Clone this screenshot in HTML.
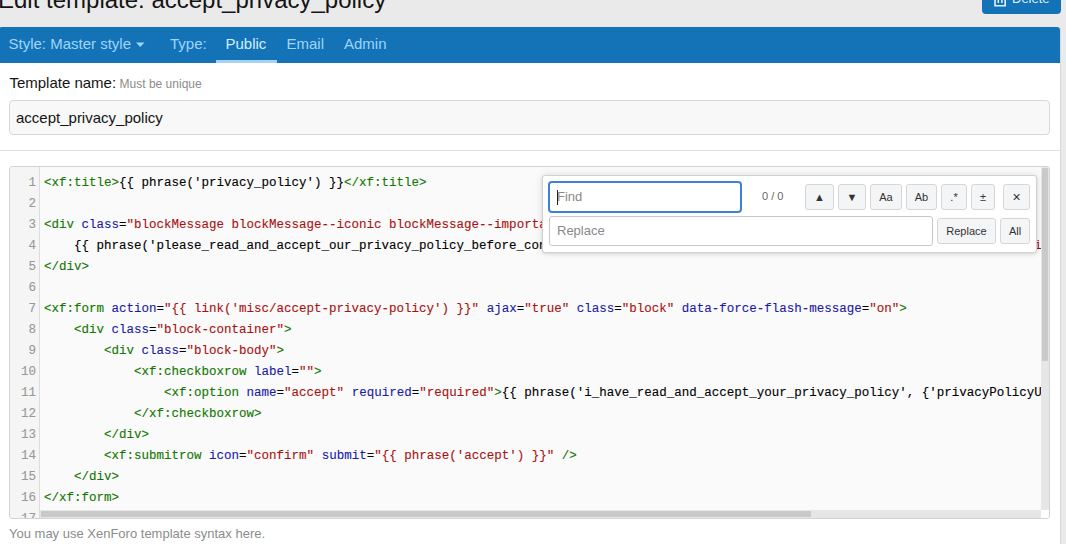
<!DOCTYPE html>
<html><head><meta charset="utf-8">
<style>
*{box-sizing:border-box;}
html,body{margin:0;padding:0;}
body{width:1066px;height:544px;overflow:hidden;position:relative;background:#eaeaea;font-family:"Liberation Sans",sans-serif;color:#141414;}
.abs{position:absolute;white-space:pre;}
#title{left:-2px;top:-14px;font-size:24px;line-height:28px;color:#141414;}
#delbtn{left:982px;top:-10px;width:79px;height:24px;background:#1373b6;border-radius:4px;}
#delbtn .t{position:absolute;left:30px;top:1px;font-size:13px;line-height:16px;color:#dff0fc;}
#delbtn svg{position:absolute;left:12px;top:0;}
#block{left:-1px;top:27px;width:1062px;height:540px;background:#fff;border:1px solid #d8d8d8;border-top:none;border-radius:3px 3px 0 0;}
#nav{left:-1px;top:27px;width:1061px;height:36px;background:#1373b6;border-radius:3px 3px 0 0;}
.tab{position:absolute;top:-1px;height:35px;font-size:15px;line-height:35px;color:#9fd5fc;white-space:pre;}
#underline{left:216px;top:60px;width:61px;height:3px;background:#a6d3f3;}
#label{left:9.4px;top:74px;font-size:15px;line-height:18px;color:#141414;}
#hint{left:119.6px;top:77px;font-size:12px;line-height:15px;color:#8c8c8c;}
#input{left:9px;top:100px;width:1041px;height:35px;background:#f8f8f8;border:1px solid #d8d8d8;border-radius:4px;}
#inputtext{left:16px;top:109px;font-size:15px;line-height:18px;color:#141414;}
#sep{left:0;top:150px;width:1060px;height:1px;background:#e2e2e2;}
#code{left:9px;top:166px;width:1041px;height:353px;background:#fafafa;border:1px solid #d3d3d3;border-radius:3px;overflow:hidden;}
#gutter{position:absolute;left:0;top:0;width:30px;height:100%;background:#f5f5f5;border-right:1px solid #dddddd;}
#lnums{position:absolute;left:0;width:26px;top:6px;font-family:"Liberation Mono",monospace;font-size:12.5px;line-height:21px;color:#999;text-align:right;white-space:pre;-webkit-text-stroke:0.12px currentColor;}
#lines{position:absolute;left:34px;top:6px;font-family:"Liberation Mono",monospace;font-size:12.5px;line-height:21px;color:#000;white-space:pre;-webkit-text-stroke:0.12px currentColor;}
.g{color:#170;} .b{color:#1a1aa8;} .r{color:#a11;}
#vscroll{left:1031px;top:0;width:8px;height:343px;background:#e6e6e6;}
#vthumb{left:1032px;top:1px;width:6px;height:193px;background:#c9c9c9;border-radius:1px;}
#hscroll{left:30px;top:343px;width:1001px;height:8px;background:#e6e6e6;}
#hthumb{left:31px;top:344px;width:770px;height:6px;background:#c9c9c9;border-radius:1px;}
#help{left:9px;top:526px;font-size:13px;line-height:16px;color:#8c8c8c;}
#panel{left:542px;top:175px;width:495px;height:78px;background:#fff;border:1px solid #d2d2d2;border-radius:3px;box-shadow:0 1px 3px rgba(0,0,0,.10),0 0 9px rgba(0,0,0,.10);}
.fi{position:absolute;background:#fff;border:1px solid #c8c8c8;border-radius:3px;font-size:13px;color:#8a8a8a;}
.fi span{position:absolute;left:8px;top:7px;line-height:15px;}
.btn{position:absolute;top:8px;height:26px;background:#f4f5f6;border:1px solid #d6d6d6;border-radius:3px;font-size:11px;line-height:24px;color:#333;text-align:center;white-space:pre;}
</style></head><body>
<div class="abs" id="title">Edit template: accept_privacy_policy</div>
<div class="abs" id="delbtn"><svg width="13" height="18" viewBox="0 0 13 18"><path d="M1 0V15.8H11.2V0" fill="none" stroke="#dff0fc" stroke-width="1.6"/><path d="M4.3 0V13M7.9 0V13" stroke="#dff0fc" stroke-width="1.5"/></svg><span class="t">Delete</span></div>
<div class="abs" id="block"></div>
<div class="abs" id="nav">
  <div class="tab" style="left:9.5px">Style: Master style</div><svg class="abs" style="left:137px;top:15px" width="9" height="6" viewBox="0 0 9 6"><path d="M0 0.5H8.5L4.25 5Z" fill="#9fd5fc"/></svg>
  <div class="tab" style="left:171px">Type:</div>
  <div class="tab" style="left:226.5px;color:#d4efff">Public</div>
  <div class="tab" style="left:287.5px">Email</div>
  <div class="tab" style="left:345px">Admin</div>
</div>
<div class="abs" id="underline"></div>
<div class="abs" id="label">Template name:</div>
<div class="abs" id="hint">Must be unique</div>
<div class="abs" id="input"></div>
<div class="abs" id="inputtext">accept_privacy_policy</div>
<div class="abs" id="sep"></div>
<div class="abs" id="code">
  <div id="gutter"></div>
  <div id="lnums"><!--N-->1
2
3
4
5
6
7
8
9
10
11
12
13
14
15
16
17<!--/N--></div>
  <div id="lines"><!--L--><span class="g">&lt;xf:title&gt;</span>{{ phrase(&#x27;privacy_policy&#x27;) }}<span class="g">&lt;/xf:title&gt;</span>

<span class="g">&lt;div</span> <span class="b">class</span>=<span class="r">&quot;blockMessage blockMessage--iconic blockMessage--important&quot;</span><span class="g">&gt;</span>
    {{ phrase(&#x27;please_read_and_accept_our_privacy_policy_before_continuing&#x27;) }}                                                     <span class="r">i</span>
<span class="g">&lt;/div&gt;</span>

<span class="g">&lt;xf:form</span> <span class="b">action</span>=<span class="r">&quot;{{ link(&#x27;misc/accept-privacy-policy&#x27;) }}&quot;</span> <span class="b">ajax</span>=<span class="r">&quot;true&quot;</span> <span class="b">class</span>=<span class="r">&quot;block&quot;</span> <span class="b">data-force-flash-message</span>=<span class="r">&quot;on&quot;</span><span class="g">&gt;</span>
    <span class="g">&lt;div</span> <span class="b">class</span>=<span class="r">&quot;block-container&quot;</span><span class="g">&gt;</span>
        <span class="g">&lt;div</span> <span class="b">class</span>=<span class="r">&quot;block-body&quot;</span><span class="g">&gt;</span>
            <span class="g">&lt;xf:checkboxrow</span> <span class="b">label</span>=<span class="r">&quot;&quot;</span><span class="g">&gt;</span>
                <span class="g">&lt;xf:option</span> <span class="b">name</span>=<span class="r">&quot;accept&quot;</span> <span class="b">required</span>=<span class="r">&quot;required&quot;</span><span class="g">&gt;</span>{{ phrase(&#x27;i_have_read_and_accept_your_privacy_policy&#x27;, {&#x27;privacyPolicyUrl&#x27;: link(&#x27;misc/privacy-policy&#x27;)}) }}
            <span class="g">&lt;/xf:checkboxrow&gt;</span>
        <span class="g">&lt;/div&gt;</span>
        <span class="g">&lt;xf:submitrow</span> <span class="b">icon</span>=<span class="r">&quot;confirm&quot;</span> <span class="b">submit</span>=<span class="r">&quot;{{ phrase(&#x27;accept&#x27;) }}&quot;</span> <span class="g">/&gt;</span>
    <span class="g">&lt;/div&gt;</span>
<span class="g">&lt;/xf:form&gt;</span>
<!--/L--></div>
  <div class="abs" id="vscroll"></div><div class="abs" id="vthumb"></div>
  <div class="abs" id="hscroll"></div><div class="abs" id="hthumb"></div><div class="abs" style="left:1031px;top:343px;width:8px;height:8px;background:#fff"></div>
</div>
<div class="abs" id="help">You may use XenForo template syntax here.</div>
<div class="abs" id="panel">
  <div class="fi" style="left:5px;top:5px;width:194px;height:32px;border:2px solid #3f7fd6;border-radius:4px;"><span style="left:7px;top:6px">Find</span><div style="position:absolute;left:7px;top:7px;width:1px;height:15px;background:#222"></div></div>
  <div class="abs" style="left:219px;top:13px;font-size:11px;line-height:14px;color:#666">0 / 0</div>
  <div class="btn" style="left:262px;width:29px">▲</div>
  <div class="btn" style="left:295px;width:28px">▼</div>
  <div class="btn" style="left:327px;width:32px">Aa</div>
  <div class="btn" style="left:363px;width:31px">Ab</div>
  <div class="btn" style="left:398px;width:26px">.*</div>
  <div class="btn" style="left:428px;width:24px">±</div>
  <div class="btn" style="left:460px;width:27px;font-size:14px">×</div>
  <div class="fi" style="left:6px;top:40px;width:384px;height:30px;"><span style="left:7px;top:6px">Replace</span></div>
  <div class="btn" style="left:394px;top:42px;width:59px;">Replace</div>
  <div class="btn" style="left:457px;top:42px;width:30px;">All</div>
</div>
</body></html>
